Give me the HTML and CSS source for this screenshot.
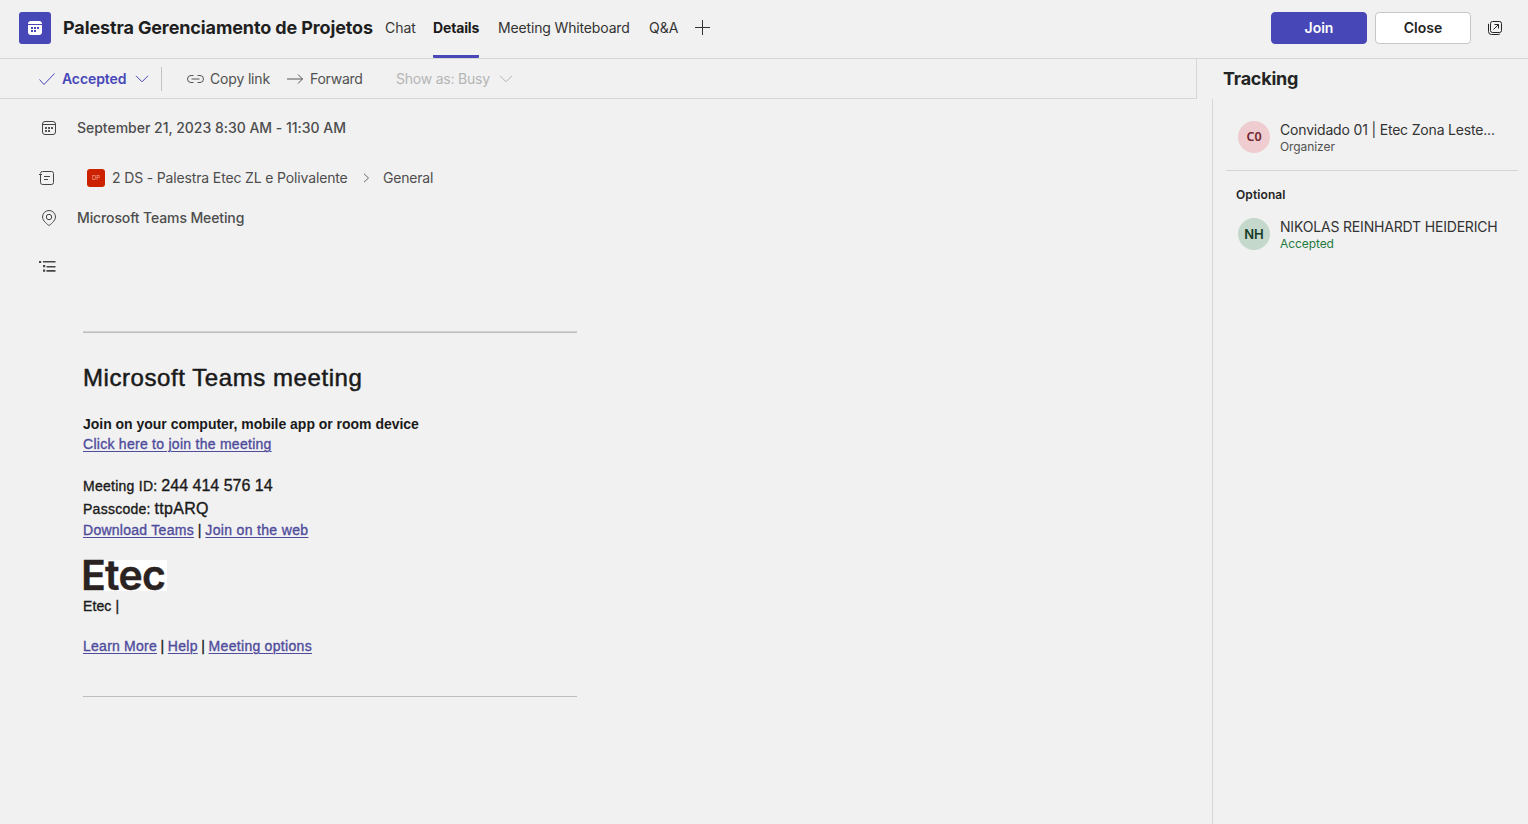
FILE: index.html
```
<!DOCTYPE html>
<html lang="en">
<head>
<meta charset="utf-8">
<title>Palestra Gerenciamento de Projetos</title>
<link rel="stylesheet" href="styles.css">
</head>
<body>
<div class="page">
  <header class="header">
    <div class="app-icon">
      <svg width="16" height="16" viewBox="0 0 16 16"><path d="M1 4a3 3 0 0 1 3-3h8a3 3 0 0 1 3 3H1zM1 5h14v7a3 3 0 0 1-3 3H4a3 3 0 0 1-3-3z" fill="#fff"/><path d="M4 7h2v2H4zM7 7h2v2H7zM10 7h2v2h-2zM4 10h2v2H4zM7 10h2v2H7z" fill="#4747b8"/></svg>
    </div>
    <h1 class="title">Palestra Gerenciamento de Projetos</h1>
    <nav class="tabs">
      <a class="tab tab-chat">Chat</a>
      <a class="tab tab-active">Details</a>
      <a class="tab tab-board">Meeting Whiteboard</a>
      <a class="tab tab-qa">Q&amp;A</a>
      <svg class="plus" width="16" height="16" viewBox="0 0 16 16" fill="none" stroke="#333"><path d="M8.5 1v15M1 8.5h15"/></svg>
    </nav>
    <div class="actions">
      <button class="btn btn-primary">Join</button>
      <button class="btn">Close</button>
      <svg class="popout" width="16" height="16" viewBox="0 0 16 16" fill="none" stroke="#242424"><rect x="3.5" y="1.5" width="11" height="11" rx="2"/><path d="M1.5 3.8v7.700a3 3 0 0 0 3 3h6.800a2 2 0 0 0 1.700-.9M6.500 9.500l5-5M7.500 4.500h4v4"/></svg>
    </div>
  </header>
  <div class="body">
    <main class="main">
      <div class="toolbar">
        <svg class="check" width="16" height="14" viewBox="0 0 16 14" fill="none" stroke="#4747b8"><path d="M.5 7.500l4.500 5L15.500 1.500"/></svg>
        <span class="accepted">Accepted</span>
        <svg width="14" height="8" viewBox="0 0 14 8" fill="none" stroke="#4747b8"><path d="M1 .8l6 6 6-6"/></svg>
        <span class="divider"></span>
        <svg class="link" width="17" height="8" viewBox="0 0 17 8" fill="none" stroke="#555"><path d="M6.500.5H4a3.500 3.500 0 0 0 0 7h2.500M10.500.5H13a3.500 3.500 0 0 1 0 7h-2.500M4.500 4h8"/></svg>
        <span class="copy">Copy link</span>
        <svg class="arrow" width="17" height="10" viewBox="0 0 17 10" fill="none" stroke="#555"><path d="M0 5h15.500M11 .5L15.500 5 11 9.500"/></svg>
        <span class="forward">Forward</span>
        <span class="busy">Show as: Busy</span>
        <svg width="14" height="8" viewBox="0 0 14 8" fill="none" stroke="#b5b5b5"><path d="M1 .8l6 6 6-6"/></svg>
      </div>
      <section class="details">
        <div class="row row-date">
          <svg width="16" height="16" viewBox="0 0 16 16"><rect x="1.500" y="1.500" width="13" height="13" rx="2.500" fill="none" stroke="#444"/><path d="M1.500 4.500h13" stroke="#444"/><path d="M4 7h2v2H4zM7 7h2v2H7zM10 7h2v2h-2zM4 10h2v2H4zM7 10h2v2H7z" fill="#555"/></svg>
          <span class="date">September 21, 2023 8:30 AM - 11:30 AM</span>
        </div>
        <div class="row row-channel">
          <svg width="16" height="16" viewBox="0 0 16 16" fill="none" stroke="#444"><path d="M1.500 4.500v8a2 2 0 0 0 2 2h9a2 2 0 0 0 2-2v-9a2 2 0 0 0-2-2h-9a2 2 0 0 0-2 2M0 4.500h3M5 6.500h6M5 9.500h4"/></svg>
          <span class="team-badge">DP</span>
          <span class="team">2 DS - Palestra Etec ZL e Polivalente</span>
          <svg class="crumb" width="7" height="10" viewBox="0 0 7 10" fill="none" stroke="#666"><path d="M1 .8L5.500 5 1 9.200"/></svg>
          <span class="general">General</span>
        </div>
        <div class="row row-place">
          <svg width="16" height="18" viewBox="0 0 16 18" fill="none" stroke="#444"><path d="M8 16.500C7 16 1.500 11.800 1.500 8a6.500 6.500 0 0 1 13 0c0 3.800-5.500 8-6.500 8.500z"/><circle cx="8" cy="8" r="2.700"/></svg>
          <span class="place">Microsoft Teams Meeting</span>
        </div>
        <div class="row row-list">
          <svg width="17" height="13" viewBox="0 0 17 13" fill="#444"><path d="M0 1h2.200v2H0zM4 1h12.500v1.500H4zM4 5h2.200v2.200H4zM7.500 6h9v1.500h-9zM4 9.500h2.200v2.300H4zM7.500 10h9v1.700h-9z"/></svg>
        </div>
      </section>
      <article class="invite">
        <h2 class="invite-title">Microsoft Teams meeting</h2>
        <p class="lead"><b>Join on your computer, mobile app or room device</b></p>
        <p><a>Click here to join the meeting</a></p>
        <p class="mid"><span class="label">Meeting ID:</span> <span class="value">244 414 576 14</span></p>
        <p class="pass"><span class="label">Passcode:</span> <span class="value value-code">ttpARQ</span></p>
        <p class="download"><a>Download Teams</a> | <a class="wide">Join on the web</a></p>
        <div class="logo">Etec</div>
        <p class="org">Etec |</p>
        <p class="links"><a>Learn More</a> | <a>Help</a> | <a class="wide">Meeting options</a></p>
      </article>
    </main>
    <aside class="side">
      <h3 class="side-title">Tracking</h3>
      <div class="people">
        <div class="person person-org">
          <span class="avatar avatar-red">C0</span>
          <div><div class="name">Convidado 01 | Etec Zona Leste...</div><div class="role">Organizer</div></div>
        </div>
        <div class="optional">Optional</div>
        <div class="person">
          <span class="avatar avatar-green">NH</span>
          <div><div class="name">NIKOLAS REINHARDT HEIDERICH</div><div class="role role-ok">Accepted</div></div>
        </div>
      </div>
    </aside>
  </div>
</div>
</body>
</html>
```
FILE: styles.css
```
* { box-sizing: border-box; }
body { margin: 0; background: #f1f1f1; color: #242424; font: 14px/20px Inter, sans-serif; }
h1, h2, h3, p { margin: 0; font-weight: 400; }
svg { display: block; flex: none; }
.page { height: 824px; display: flex; flex-direction: column; white-space: nowrap; overflow: hidden; }
.header { height: 59px; flex: none; display: flex; border-bottom: 1px solid #d6d6d6; padding: 0 25px 0 19px; }
.app-icon { width: 32px; height: 32px; margin-top: 12px; border-radius: 3px; background: #4747b8; display: grid; place-items: center; flex: none; }
.title { width: 310px; margin-left: 12px; font-size: 18px; font-weight: 700; line-height: 56px; letter-spacing: -.12px; color: #1f1f1f; }
.tabs { display: flex; margin-left: 12px; line-height: 56px; height: 58px; }
.tab { color: #333; }
.tab-chat { width: 31px; margin-right: 17px; }
.tab-active { width: 46px; margin-right: 19px; font-weight: 700; letter-spacing: -.16px; color: #1a1a1a; border-bottom: 3px solid #4747b8; border-radius: 1px; }
.tab-board { width: 132px; margin-right: 19px; letter-spacing: -.15px; }
.tab-qa { width: 30px; }
.plus { margin: 19px 0 0 15px; }
.actions { margin-left: auto; display: flex; gap: 8px; padding-top: 12px; }
.btn { width: 96px; height: 32px; padding: 0; border: 1px solid #c7c7c7; border-radius: 4px; background: #fff; color: #242424; font: 600 14px/30px Inter, sans-serif; }
.btn-primary { background: #4747b8; border-color: #4747b8; color: #fff; }
.popout { margin: 8px 0 0 8px; }
.body { flex: 1; display: flex; }
.main { width: 1197px; }
.toolbar { height: 40px; display: flex; align-items: center; border-bottom: 1px solid #d6d6d6; border-right: 1px solid #d6d6d6; padding-left: 39px; color: #505050; }
.accepted { width: 65px; margin: 0 8px 0 7px; font-weight: 600; letter-spacing: -.1px; color: #4747b8; }
.divider { width: 1px; height: 24px; margin: 0 25px 0 12px; background: #c4c4c4; }
.copy { width: 60px; margin: 0 17px 0 6px; letter-spacing: -.17px; }
.forward { width: 53px; margin: 0 33px 0 6px; letter-spacing: -.25px; }
.busy { width: 94px; margin-right: 9px; letter-spacing: -.22px; color: #b5b5b5; }
.row { display: flex; align-items: center; height: 20px; color: #4d4d4d; }
.details { padding-left: 39px; }
.row-date { margin-top: 19px; padding-left: 2px; }
.date, .place { margin-left: 20px; font-weight: 500; }
.date { letter-spacing: -.02px; }
.place { letter-spacing: -.12px; }
.row-channel { margin-top: 30px; }
.team-badge { width: 18px; height: 18px; margin: 0 7px 0 32px; border-radius: 3px; background: #cc2200; color: #f3b0a0; font-size: 6px; line-height: 18px; text-align: center; }
.team { width: 236px; letter-spacing: -.15px; }
.crumb { margin: 0 13px 0 15px; }
.general { letter-spacing: -.2px; }
.row-place { margin-top: 20px; padding-left: 2px; }
.row-list { margin-top: 28px; }
.invite { width: 494px; height: 366px; margin: 55px 0 0 83px; border-top: 1px solid #d2d2d2; border-bottom: 1px solid #bdbdbd; box-shadow: inset 0 1px #bdbdbd; color: #1a1a1a; font-family: "Liberation Sans", Arial, sans-serif; -webkit-text-stroke: .35px; }
.invite a { letter-spacing: .27px; color: #4f4c9c; text-decoration: underline; text-underline-offset: 2px; text-decoration-thickness: 1px; }
.invite .wide { letter-spacing: .33px; }
.invite-title { font-size: 24px; line-height: 30px; margin-top: 31px; letter-spacing: .57px; -webkit-text-stroke: .5px; }
.lead { margin-top: 21px; letter-spacing: -.02px; -webkit-text-stroke: 0; }
.mid { margin-top: 21px; line-height: 22px; }
.pass { line-height: 23px; }
.label { letter-spacing: .26px; }
.value { font-size: 16px; }
.value-code { letter-spacing: .3px; }
.download { line-height: 19px; }
.logo { width: 84px; height: 31px; margin-top: 20px; background: #fff; color: #2b2322; font: 600 41px/31px Inter, sans-serif; letter-spacing: -.75px; text-indent: -2px; -webkit-text-stroke: .4px; }
.org { margin-top: 5px; letter-spacing: .1px; }
.links { margin-top: 20px; word-spacing: -.3px; }
.side { flex: 1; display: flex; flex-direction: column; }
.side-title { height: 40px; padding-left: 26px; font-size: 18px; font-weight: 700; line-height: 40px; letter-spacing: -.22px; }
.people { flex: 1; margin-left: 15px; padding: 0 10px 0 13px; border-left: 1px solid #d6d6d6; }
.person { display: flex; padding-left: 12px; gap: 10px; }
.person-org { height: 72px; padding-top: 22px; border-bottom: 1px solid #d6d6d6; }
.avatar { width: 32px; height: 32px; border-radius: 50%; font-size: 13px; font-weight: 600; line-height: 32px; text-align: center; flex: none; }
.avatar-red { background: #eecccf; color: #6e2430; font: 600 12.5px/32px "Noto Sans", sans-serif; }
.avatar-green { background: #c4d8cc; color: #173d27; }
.name { line-height: 18px; letter-spacing: -.18px; color: #333; }
.role { font-size: 12px; line-height: 15px; letter-spacing: -.08px; color: #505050; }
.role-ok { color: #1f7a3f; }
.optional { margin: 16px 0 15px 10px; font-size: 12px; line-height: 16px; font-weight: 600; letter-spacing: .1px; }
```
